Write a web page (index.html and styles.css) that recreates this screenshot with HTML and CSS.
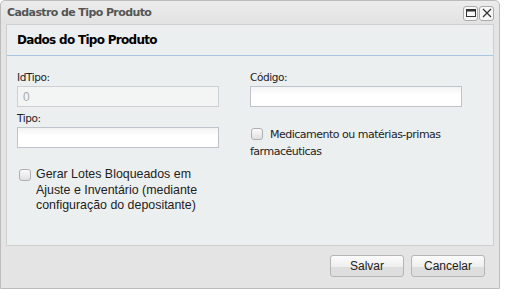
FILE: index.html
```html
<!DOCTYPE html>
<html lang="pt-BR">
<head>
    <meta charset="UTF-8">
    <title>Cadastro de Tipo Produto</title>
    <link rel="stylesheet" href="styles.css">
</head>
<body>
    <div class="window">
        <div class="titlebar">
            <span class="title">Cadastro de Tipo Produto</span>
            <div class="tools">
                <span class="tool"><svg width="12" height="12" viewBox="0 0 12 12"><rect x="1.5" y="2.5" width="9" height="7" fill="none" stroke="#333" stroke-width="1"/><rect x="1.5" y="2.5" width="9" height="2" fill="#333"/></svg></span>
                <span class="tool"><svg width="12" height="12" viewBox="0 0 12 12"><path d="M2 2 L10 10 M10 2 L2 10" stroke="#333" stroke-width="1.2"/></svg></span>
            </div>
        </div>
        <div class="panel">
            <div class="panel-header">Dados do Tipo Produto</div>
            <div class="panel-body">
                <div class="col">
                    <label class="lbl">IdTipo:</label>
                    <input class="txt" type="text" value="0" disabled>
                    <label class="lbl lbl-second">Tipo:</label>
                    <input class="txt" type="text">
                    <label class="check check-lotes">
                        <span class="box"></span>
                        <span>Gerar Lotes Bloqueados em Ajuste e Inventário (mediante configuração do depositante)</span>
                    </label>
                </div>
                <div class="col col-right">
                    <label class="lbl">Código:</label>
                    <input class="txt txt-wide" type="text">
                    <label class="check check-med">
                        <span class="box"></span> Medicamento ou matérias-primas farmacêuticas
                    </label>
                </div>
            </div>
        </div>
        <div class="footer">
            <button class="btn">Salvar</button>
            <button class="btn">Cancelar</button>
        </div>
    </div>
</body>
</html>
```

FILE: styles.css
```css
body {
    margin: 0;
    background: #fff;
    font-family: 'Liberation Sans', Arial, sans-serif;
    color: #222;
}

.window {
    width: 498px;
    height: 287px;
    border: 1px solid #bcbcbc;
    border-radius: 5px 5px 0 0;
    background: #e4e4e4;
    display: flex;
    flex-direction: column;
}

.titlebar {
    height: 23px;
    display: flex;
    align-items: center;
    justify-content: space-between;
    padding: 0 5px 0 6px;
    background: linear-gradient(#ececec, #e2e2e2);
    border-radius: 5px 5px 0 0;
}

.title {
    font-family: 'DejaVu Sans', sans-serif;
    font-size: 11px;
    font-weight: bold;
    color: #555;
    letter-spacing: -0.6px;
}

.tools {
    display: flex;
    gap: 1px;
    margin-top: 1px;
}

.tool {
    width: 13px;
    height: 13px;
    border: 1px solid #aaa;
    border-radius: 3px;
    background: #f7f7f7;
    display: flex;
    align-items: center;
    justify-content: center;
}

.panel {
    margin: 0 5px 0 5px;
    height: 220px;
    border: 1px solid #cfcfcf;
    background: #eceff0;
}

.panel-header {
    height: 30px;
    line-height: 31px;
    padding-left: 10px;
    font-family: 'DejaVu Sans', sans-serif;
    font-size: 12px;
    font-weight: bold;
    color: #000;
    letter-spacing: -0.7px;
    border-bottom: 1px solid #a9c6e5;
}

.panel-body {
    display: flex;
    gap: 31px;
    padding: 14px 10px 0 10px;
}

.col {
    width: 202px;
    display: flex;
    flex-direction: column;
}

.col-right {
    width: 212px;
}

.lbl {
    font-family: 'DejaVu Sans', sans-serif;
    font-size: 10.5px;
    letter-spacing: -0.4px;
    color: #222;
    height: 16px;
    line-height: 14px;
}

.lbl-second {
    margin-top: 4px;
}

.txt {
    box-sizing: border-box;
    width: 202px;
    height: 21px;
    margin: 0;
    border: 1px solid #bfc4cc;
    background: linear-gradient(#f4f4f4, #fff 40%);
    padding: 0 5px;
    font-family: 'Liberation Sans', Arial, sans-serif;
    font-size: 12px;
}

.txt:disabled {
    background: #f3f5f5;
    border-color: #cdd0d3;
    color: #aaa;
}

.txt-wide {
    width: 212px;
}

.check {
    display: block;
    font-size: 12px;
    line-height: 16px;
}

.box {
    display: inline-block;
    box-sizing: border-box;
    width: 12px;
    height: 12px;
    border: 1px solid #b0b0b0;
    border-radius: 3px;
    background: linear-gradient(#fafafa, #e0e0e0);
    vertical-align: -2px;
}

.check-med {
    margin-top: 19px;
    font-family: 'DejaVu Sans', sans-serif;
    font-size: 11px;
    letter-spacing: -0.5px;
    line-height: 17px;
}

.check-med .box {
    margin-left: 1px;
    margin-right: 4px;
}

.check-lotes {
    margin-top: 19px;
    display: flex;
    gap: 5px;
    padding-left: 2px;
    line-height: 15.5px;
    font-size: 12.4px;
}

.check-lotes .box {
    flex-shrink: 0;
    margin-top: 2px;
}

.footer {
    flex: 1;
    display: flex;
    justify-content: flex-end;
    gap: 7px;
    padding: 9px 14px 0 0;
}

.btn {
    width: 74px;
    height: 22px;
    border: 1px solid #b5b5b5;
    border-radius: 3px;
    background: linear-gradient(#fcfcfc 0%, #eeeeee 55%, #dedede 56%, #dedede 100%);
    font-family: 'Liberation Sans', Arial, sans-serif;
    font-size: 12px;
    color: #222;
    padding: 0;
}
```
